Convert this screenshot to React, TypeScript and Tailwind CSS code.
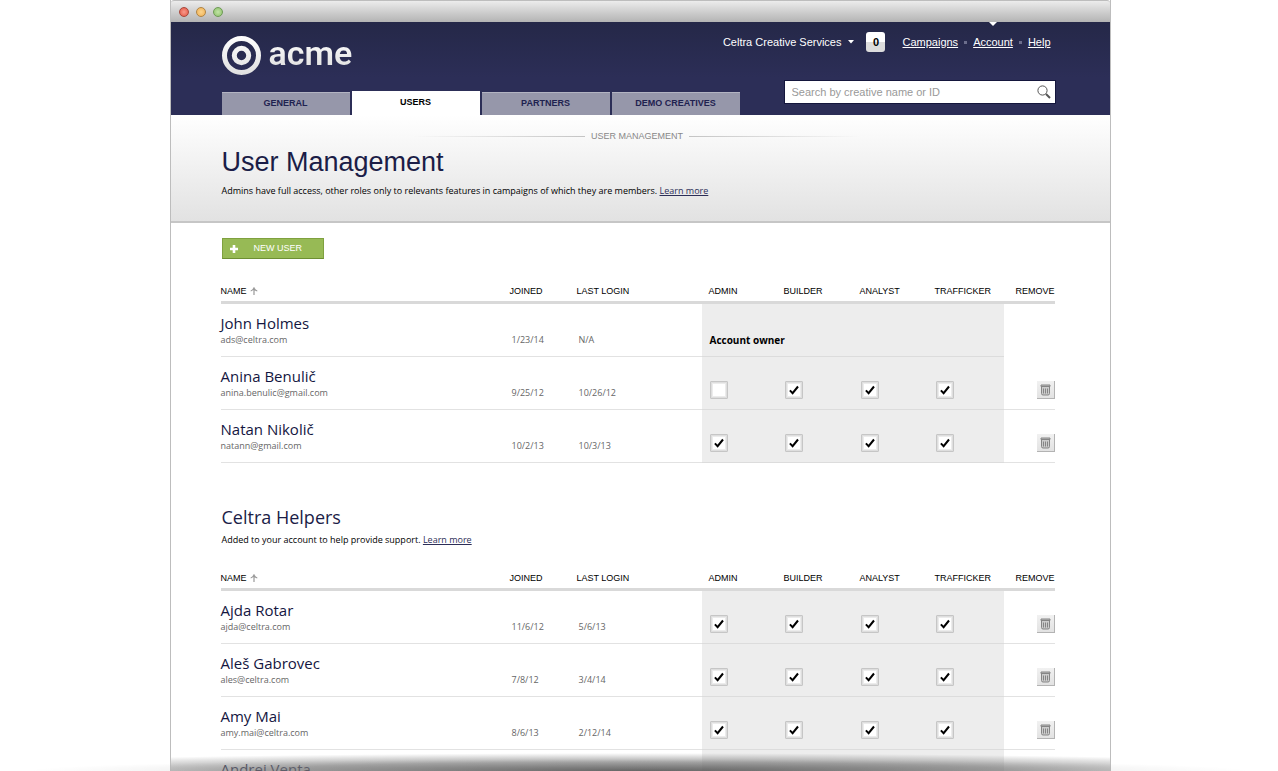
import { useState } from 'react';

type Role = 'Admin' | 'Builder' | 'Analyst' | 'Trafficker';
type User = {
  name: string;
  email?: string;
  joined?: string;
  lastLogin?: string;
  owner?: boolean;
  roles?: Role[];
};

const ROLES: Role[] = ['Admin', 'Builder', 'Analyst', 'Trafficker'];

const members: User[] = [
  { name: 'John Holmes', email: 'ads@celtra.com', joined: '1/23/14', lastLogin: 'N/A', owner: true },
  { name: 'Anina Benulič', email: 'anina.benulic@gmail.com', joined: '9/25/12', lastLogin: '10/26/12', roles: ['Builder', 'Analyst', 'Trafficker'] },
  { name: 'Natan Nikolič', email: 'natann@gmail.com', joined: '10/2/13', lastLogin: '10/3/13', roles: ROLES },
];

const helpers: User[] = [
  { name: 'Ajda Rotar', email: 'ajda@celtra.com', joined: '11/6/12', lastLogin: '5/6/13', roles: ROLES },
  { name: 'Aleš Gabrovec', email: 'ales@celtra.com', joined: '7/8/12', lastLogin: '3/4/14', roles: ROLES },
  { name: 'Amy Mai', email: 'amy.mai@celtra.com', joined: '8/6/13', lastLogin: '2/12/14', roles: ROLES },
  { name: 'Andrej Venta' },
];

const TABS = ['GENERAL', 'USERS', 'PARTNERS', 'DEMO CREATIVES'];

function RoleCheckbox({ label, initial }: { label: string; initial: boolean }) {
  const [on, setOn] = useState(initial);
  return (
    <label className="relative block size-[18px] rounded-[1px] border border-[#c6c6c6] bg-[#dedede] p-[2px]">
      <input
        type="checkbox"
        aria-label={label}
        checked={on}
        onChange={(e) => setOn(e.target.checked)}
        className="block size-3 appearance-none bg-white outline outline-[#ececec]"
      />
      {on && (
        <svg viewBox="0 0 10 10" className="pointer-events-none absolute top-[3px] left-[3px] size-[10px]" fill="none" stroke="#000" strokeWidth="2">
          <path d="M0.9 5.4 L3.6 8.2 L9 1.5" />
        </svg>
      )}
    </label>
  );
}

function TrashButton({ name }: { name: string }) {
  return (
    <button
      type="button"
      aria-label={`Remove ${name}`}
      className="ml-auto flex size-[18px] items-center justify-center border-r border-b border-[#b3b3b3] bg-linear-to-b from-[#f1f1f1] to-[#e2e2e2]"
    >
      <svg viewBox="0 0 11 12" className="h-3 w-[11px]" fill="none" stroke="#858585">
        <path d="M1 2.5 V1 H10 V2.5 Z" fill="#bbb" />
        <path d="M1.5 3 V9.5 Q1.5 11 3 11 H8 Q9.5 11 9.5 9.5 V3" fill="#ccc" />
        <path d="M3.5 4.5 V9.5 M5.5 4.5 V9.5 M7.5 4.5 V9.5" />
      </svg>
    </button>
  );
}

function UserRow({ user }: { user: User }) {
  const line = 'border-b border-[#e2e2e2]';
  return (
    <tr className="h-[53px] align-bottom">
      <td className={`${line} pb-2`}>
        <div className="text-[15px] leading-[18px] text-[#14163f]">{user.name}</div>
        <div className="h-4 text-[9px] leading-4 text-[#666]">{user.email}</div>
      </td>
      <td className={`${line} pb-2 pl-[2px] text-[9px] leading-4 text-[#666]`}>{user.joined}</td>
      <td className={`${line} pb-2 pl-[2px] text-[9px] leading-4 text-[#666]`}>{user.lastLogin}</td>
      {user.owner && (
        <td colSpan={4} className="border-b border-[#dcdcdc] bg-[#ededed] pb-2 pl-2 text-[10px] leading-4 font-bold text-black">
          Account owner
        </td>
      )}
      {!user.owner &&
        ROLES.map((role) => (
          <td key={role} className="border-b border-[#dcdcdc] bg-[#ededed] pb-[10px] pl-2">
            {user.roles && <RoleCheckbox label={`${role}: ${user.name}`} initial={user.roles.includes(role)} />}
          </td>
        ))}
      {user.owner ? <td /> : <td className={`${line} pb-[10px]`}>{user.roles && <TrashButton name={user.name} />}</td>}
    </tr>
  );
}

function UserTable({ users, label }: { users: User[]; label: string }) {
  return (
    <table aria-label={label} className="w-full table-fixed border-separate border-spacing-0 text-left">
      <colgroup>
        <col />
        <col className="w-[67px]" />
        <col className="w-[125px]" />
        <col className="w-[75px]" />
        <col className="w-[76px]" />
        <col className="w-[75px]" />
        <col className="w-[76px]" />
        <col className="w-[51px]" />
      </colgroup>
      <thead className="font-['Liberation_Sans',sans-serif] text-[9px] leading-3 text-black">
        <tr className="*:border-b-[3px] *:border-[#d9d9d9] *:pb-1 *:font-normal">
          <th scope="col">
            <button type="button" className="flex items-center gap-[3px]">
              NAME
              <svg viewBox="0 0 8 8" className="size-2" fill="none" stroke="#999" strokeWidth="1.2">
                <path d="M4 8 V1 M0.7 4 Q3 3.5 4 1 Q5 3.5 7.3 4" />
              </svg>
            </button>
          </th>
          <th scope="col">JOINED</th>
          <th scope="col">LAST LOGIN</th>
          {ROLES.map((role) => (
            <th key={role} scope="col" className="pl-[7px]">
              {role.toUpperCase()}
            </th>
          ))}
          <th scope="col" className="text-right">REMOVE</th>
        </tr>
      </thead>
      <tbody>
        {users.map((user) => (
          <UserRow key={user.name} user={user} />
        ))}
      </tbody>
    </table>
  );
}

function TrafficLight({ tone }: { tone: string }) {
  return <span className={`size-[10px] rounded-full border ${tone}`} />;
}

export default function App() {
  return (
    <div className="relative h-screen overflow-hidden bg-white pl-[2px] font-['Open_Sans',sans-serif]">
      <div className="relative mx-auto h-full w-full max-w-[941px] overflow-hidden border-x border-[#bdbdbd] bg-white">
        <div className="flex h-[22px] items-center gap-[7px] rounded-t-[3px] border-t border-[#bdbdbd] bg-linear-to-b from-[#ececec] to-[#b4b4b4] pl-2">
          <TrafficLight tone="border-[#a8483c] bg-radial from-[#f79a8c] to-[#e2503f]" />
          <TrafficLight tone="border-[#b08443] bg-radial from-[#fbd48c] to-[#efb052]" />
          <TrafficLight tone="border-[#6d9a55] bg-radial from-[#c2e4a6] to-[#8cc069]" />
        </div>

        <header className="flex h-[93px] flex-col justify-between bg-linear-to-b from-[#252848] to-[#2c2e57] to-60% pr-[55px] pl-[51px] font-['Liberation_Sans',sans-serif]">
          <div className="flex items-start justify-between">
            <a href="#home" aria-label="acme" className="flex items-start gap-[7px] pt-[14px]">
              <svg viewBox="0 0 40 40" className="size-10" fill="none">
                <defs>
                  <linearGradient id="ring" x1="0" y1="0" x2="0" y2="40" gradientUnits="userSpaceOnUse">
                    <stop offset="0" stopColor="#fff" />
                    <stop offset="1" stopColor="#dedede" />
                  </linearGradient>
                </defs>
                <circle cx="19.5" cy="19.5" r="17" stroke="url(#ring)" strokeWidth="5" />
                <circle cx="19.5" cy="19.5" r="7.2" stroke="url(#ring)" strokeWidth="5" />
              </svg>
              <span className="bg-linear-to-b from-white to-[#e0e0e0] bg-clip-text pt-px font-['Roboto',sans-serif] text-[34px] leading-8 font-semibold text-transparent">acme</span>
            </a>
            <div className="flex items-center pt-[10px] pr-1 text-[11px] whitespace-nowrap text-white">
              <button type="button" className="flex items-center gap-[7px]">
                Celtra Creative Services
                <svg viewBox="0 0 6 4" className="mb-px h-1 w-[6px]" fill="#fff">
                  <path d="M0 0 H6 L3 3.6 Z" />
                </svg>
              </button>
              <span className="ml-3 flex h-5 w-[19px] shrink-0 items-center justify-center rounded-[3px] bg-linear-to-b from-white from-50% to-[#dcdcdc] to-50% font-bold text-black">0</span>
              <nav aria-label="Main" className="ml-[17px] flex items-center gap-[6px]">
                <a href="#campaigns" className="underline">Campaigns</a>
                <span className="size-[3px] bg-[#6c6e8c]" />
                <a href="#account" aria-current="page" className="relative underline">
                  Account
                  <svg viewBox="0 0 8 4" className="absolute -top-3 left-4 h-1 w-2" fill="#fff">
                    <path d="M0 0 H8 L4 4 Z" />
                  </svg>
                </a>
                <span className="size-[3px] bg-[#6c6e8c]" />
                <a href="#help" className="underline">Help</a>
              </nav>
            </div>
          </div>

          <div className="flex items-end justify-between">
            <nav aria-label="Account sections" className="flex items-end gap-[2px] text-[9px] font-bold">
              {TABS.map((tab) =>
                tab === 'USERS' ? (
                  <a key={tab} href="#users" aria-current="page" className="flex h-6 w-32 items-center justify-center bg-white text-black">
                    {tab}
                  </a>
                ) : (
                  <a key={tab} href="#section" className="flex h-[23px] w-32 items-center justify-center border-t border-[#b3b4c2] bg-[#9697aa] text-[#1f2250]">
                    {tab}
                  </a>
                ),
              )}
            </nav>
            <div className="mb-3 flex h-[22px] w-[270px] items-center bg-white pr-1 pl-[7px] outline outline-[#14163c]">
              <input
                type="search"
                aria-label="Search by creative name or ID"
                placeholder="Search by creative name or ID"
                className="w-full bg-transparent text-[11px] text-black outline-none placeholder:text-[#999]"
              />
              <svg viewBox="0 0 14 14" className="size-[14px] shrink-0" fill="none" stroke="#555">
                <circle cx="5.5" cy="5.5" r="4.6" />
                <path d="M9 9 L13 13" strokeWidth="2" />
              </svg>
            </div>
          </div>
        </header>

        <section className="h-[108px] border-b-2 border-[#c6c6c6] bg-linear-to-b from-white to-[#e2e2e2] pt-[15px] pl-[51px]">
          <div className="flex items-center justify-center gap-[6px] pr-[57px] font-['Liberation_Sans',sans-serif] text-[9px] leading-3 text-[#888]">
            <span className="h-px w-[172px] bg-linear-to-r from-transparent to-[#c4c4c4]" />
            USER MANAGEMENT
            <span className="h-px w-[172px] bg-linear-to-l from-transparent to-[#c4c4c4]" />
          </div>
          <h1 className="mt-1 font-['Liberation_Sans',sans-serif] text-[27px] leading-8 text-[#1b1d47]">User Management</h1>
          <p className="mt-[5px] text-[9px] leading-4 text-black">
            Admins have full access, other roles only to relevants features in campaigns of which they are members.{' '}
            <a href="#roles" className="text-[#2c2e57] underline">Learn more</a>
          </p>
        </section>

        <main className="pt-[15px] pr-[55px] pl-[50px]">
          <button type="button" className="ml-px flex h-[21px] w-[102px] items-center border border-[#7fa13f] border-b-[#6d8f33] bg-[#97ba55] pl-[7px] font-['Liberation_Sans',sans-serif] text-[9px] text-white">
            <svg viewBox="0 0 8 8" className="mr-4 size-2" stroke="#fff" strokeWidth="2.6">
              <path d="M4 0 V8 M0 4 H8" />
            </svg>
            NEW USER
          </button>
          <div className="mt-[26px]">
            <UserTable users={members} label="Users" />
          </div>
          <h2 className="mt-[39px] ml-px text-[18px] leading-[30px] text-[#1b1d47]">Celtra Helpers</h2>
          <p className="ml-px text-[9px] leading-4 text-black">
            Added to your account to help provide support.{' '}
            <a href="#helpers" className="text-[#2c2e57] underline">Learn more</a>
          </p>
          <div className="mt-6">
            <UserTable users={helpers} label="Celtra Helpers" />
          </div>
        </main>
        <div className="pointer-events-none absolute inset-x-0 bottom-0 h-[18px] bg-[radial-gradient(80%_100%_at_50%_100%,rgba(110,110,110,0.9),rgba(135,135,135,0.7)_50%,rgba(170,170,170,0))]" />
      </div>
      <div className="pointer-events-none absolute inset-x-0 bottom-0 h-3 bg-[radial-gradient(48%_100%_at_50%_100%,rgba(0,0,0,0.18),transparent)]" />
    </div>
  );
}
